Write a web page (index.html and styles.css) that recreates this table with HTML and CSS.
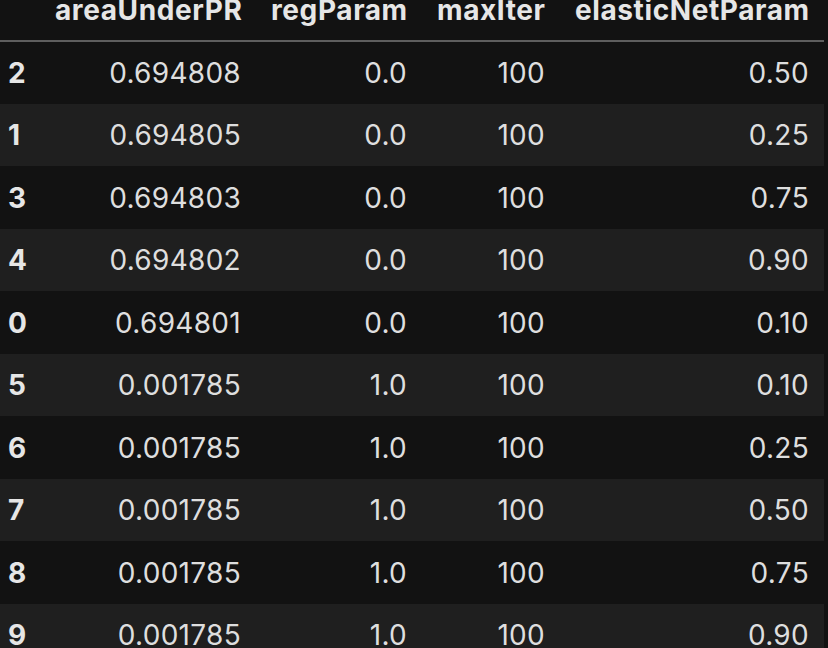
FILE: index.html
```html
<!DOCTYPE html>
<html>
<head>
<meta charset="utf-8">
<link rel="stylesheet" href="styles.css">
</head>
<body>
<div class="scroller">
<table class="df">
  <colgroup>
    <col class="c-idx"><col class="c-a"><col class="c-b"><col class="c-c"><col class="c-d">
  </colgroup>
  <thead>
    <tr><th></th><th>areaUnderPR</th><th>regParam</th><th>maxIter</th><th>elasticNetParam</th></tr>
  </thead>
  <tbody>
    <tr><th>2</th><td>0.694808</td><td>0.0</td><td>100</td><td>0.50</td></tr>
    <tr><th>1</th><td>0.694805</td><td>0.0</td><td>100</td><td>0.25</td></tr>
    <tr><th>3</th><td>0.694803</td><td>0.0</td><td>100</td><td>0.75</td></tr>
    <tr><th>4</th><td>0.694802</td><td>0.0</td><td>100</td><td>0.90</td></tr>
    <tr><th>0</th><td>0.694801</td><td>0.0</td><td>100</td><td>0.10</td></tr>
    <tr><th>5</th><td>0.001785</td><td>1.0</td><td>100</td><td>0.10</td></tr>
    <tr><th>6</th><td>0.001785</td><td>1.0</td><td>100</td><td>0.25</td></tr>
    <tr><th>7</th><td>0.001785</td><td>1.0</td><td>100</td><td>0.50</td></tr>
    <tr><th>8</th><td>0.001785</td><td>1.0</td><td>100</td><td>0.75</td></tr>
    <tr><th>9</th><td>0.001785</td><td>1.0</td><td>100</td><td>0.90</td></tr>
  </tbody>
</table>
</div>
</body>
</html>
```

FILE: styles.css
```css
html, body {
  margin: 0;
  padding: 0;
  background: #121212;
  overflow: hidden;
}
.scroller {
  margin-top: -21.5px;
}
.df {
  border-collapse: collapse;
  table-layout: fixed;
  width: 824px;
  font-family: Inter, "Noto Sans", sans-serif;
  font-size: 28px;
  color: #dedede;
}
.c-idx { width: 40px; }
.c-a { width: 216px; }
.c-b { width: 166px; }
.c-c { width: 138px; }
.c-d { width: 264px; }
.df tr { height: 62.5px; }
.df th, .df td {
  padding: 1px 15px 0;
  text-align: right;
  white-space: nowrap;
  vertical-align: middle;
}
.df td {
  letter-spacing: 0.3px;
}
.df thead th {
  font-weight: 700;
  color: #e6e6e6;
  letter-spacing: 0.6px;
  border-bottom: 2px solid #5e5e5e;
}
.df tbody th {
  text-align: left;
  padding-left: 8px;
  padding-right: 0;
  font-weight: 700;
  color: #e6e6e6;
}
.df tbody tr:nth-child(even) {
  background: #1f1f1f;
}
```
